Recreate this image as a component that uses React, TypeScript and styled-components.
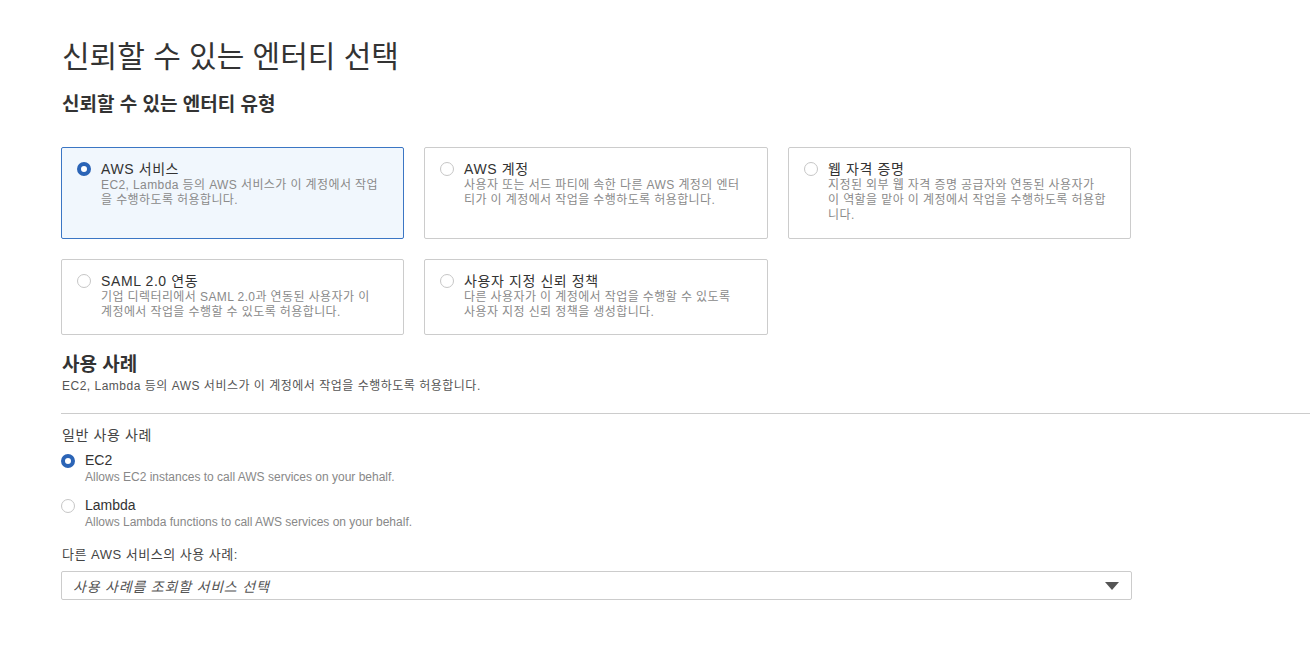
import React, { useState } from 'react';
import styled, { createGlobalStyle } from 'styled-components';

const GlobalStyle = createGlobalStyle`
  html, body {
    margin: 0;
    padding: 0;
    background: #fff;
  }
  body {
    font-family: 'Liberation Sans', Arial, 'Noto Sans CJK KR', sans-serif;
    color: #333;
  }
  * { box-sizing: border-box; }
`;

const Page = styled.div`
  padding: 38px 0 40px 61px;
  width: 1310px;
`;

const Title = styled.h1`
  margin: 0 0 0 1px;
  font-size: 30px;
  font-weight: 400;
  line-height: 38px;
  color: #333;
`;

const SectionTitle = styled.h2<{ $top?: number }>`
  margin: ${({ $top }) => $top ?? 0}px 0 0 1px;
  font-size: 19px;
  font-weight: 700;
  line-height: 24px;
  color: #333;
`;

const TypeGrid = styled.div`
  margin-top: 30px;
  display: grid;
  grid-template-columns: 343px 344px 343px;
  column-gap: 20px;
  row-gap: 20px;
  width: 1070px;
`;

const Card = styled.div<{ $selected?: boolean; $tall?: boolean }>`
  height: ${({ $tall }) => ($tall ? '92px' : '76px')};
  border: 1px solid ${({ $selected }) => ($selected ? '#3b76c4' : '#ccc')};
  border-radius: 2px;
  background: ${({ $selected }) => ($selected ? '#f1f7fd' : '#fff')};
  padding: 12px 14px 0 15px;
  display: flex;
  gap: 10px;
  cursor: pointer;
`;

const Radio = styled.span<{ $checked?: boolean }>`
  flex-shrink: 0;
  width: 14px;
  height: 14px;
  margin-top: 2px;
  border-radius: 50%;
  border: ${({ $checked }) => ($checked ? '4px solid #2b64b6' : '1px solid #c6c6c6')};
  background: #fff;
`;

const CardBody = styled.div`
  display: flex;
  flex-direction: column;
  min-width: 0;
  white-space: nowrap;
`;

const CardTitle = styled.div`
  font-size: 14px;
  line-height: 18px;
  letter-spacing: 0.6px;
  color: #333;
`;

const CardDesc = styled.div`
  font-size: 12px;
  line-height: 15px;
  letter-spacing: 0.4px;
  color: #8a8a8a;
`;

const UseCaseHeader = styled.div`
  margin-top: 18px;
  padding-bottom: 19px;
  border-bottom: 1px solid #ccc;
`;

const UseCaseDesc = styled.div`
  margin-top: 1px;
  margin-left: 1px;
  font-size: 12px;
  line-height: 16px;
  letter-spacing: 0.5px;
  color: #555;
`;

const GroupLabel = styled.div`
  margin-top: 12px;
  margin-left: 1px;
  font-size: 14px;
  line-height: 18px;
  letter-spacing: 0.6px;
  color: #444;
`;

const OptionList = styled.div`
  margin-top: 8px;
  display: flex;
  flex-direction: column;
  gap: 12px;
`;

const Option = styled.label`
  display: flex;
  gap: 10px;
  cursor: pointer;
`;

const OptionTitle = styled.div`
  font-size: 14px;
  line-height: 16px;
  color: #333;
`;

const OptionDesc = styled.div`
  margin-top: 2px;
  font-size: 12px;
  line-height: 15px;
  color: #888;
`;

const OtherLabel = styled.div`
  margin-top: 16px;
  margin-left: 1px;
  font-size: 13px;
  line-height: 18px;
  letter-spacing: 0.5px;
  color: #444;
`;

const Select = styled.div`
  margin-top: 7px;
  width: 1071px;
  height: 29px;
  border: 1px solid #ccc;
  border-radius: 2px;
  display: flex;
  align-items: center;
  justify-content: space-between;
  padding: 0 12px 0 11px;
`;

const Placeholder = styled.span`
  font-size: 14px;
  font-style: italic;
  letter-spacing: 0.8px;
  color: #555;
`;

const Caret = styled.svg`
  width: 14px;
  height: 8px;
`;

const types = [
  {
    title: 'AWS 서비스',
    desc: ['EC2, Lambda 등의 AWS 서비스가 이 계정에서 작업', '을 수행하도록 허용합니다.'],
  },
  {
    title: 'AWS 계정',
    desc: ['사용자 또는 서드 파티에 속한 다른 AWS 계정의 엔터', '티가 이 계정에서 작업을 수행하도록 허용합니다.'],
  },
  {
    title: '웹 자격 증명',
    desc: [
      '지정된 외부 웹 자격 증명 공급자와 연동된 사용자가',
      '이 역할을 맡아 이 계정에서 작업을 수행하도록 허용합',
      '니다.',
    ],
  },
  {
    title: 'SAML 2.0 연동',
    desc: ['기업 디렉터리에서 SAML 2.0과 연동된 사용자가 이', '계정에서 작업을 수행할 수 있도록 허용합니다.'],
  },
  {
    title: '사용자 지정 신뢰 정책',
    desc: ['다른 사용자가 이 계정에서 작업을 수행할 수 있도록', '사용자 지정 신뢰 정책을 생성합니다.'],
  },
];

const useCases = [
  { title: 'EC2', desc: 'Allows EC2 instances to call AWS services on your behalf.' },
  { title: 'Lambda', desc: 'Allows Lambda functions to call AWS services on your behalf.' },
];

export default function App() {
  const [type, setType] = useState(0);
  const [useCase, setUseCase] = useState(0);

  return (
    <Page>
      <GlobalStyle />
      <Title>신뢰할 수 있는 엔터티 선택</Title>
      <SectionTitle $top={17}>신뢰할 수 있는 엔터티 유형</SectionTitle>

      <TypeGrid>
        {types.map((t, i) => (
          <Card key={t.title} $selected={type === i} $tall={i < 3} onClick={() => setType(i)}>
            <Radio $checked={type === i} />
            <CardBody>
              <CardTitle>{t.title}</CardTitle>
              {t.desc.map((line) => (
                <CardDesc key={line}>{line}</CardDesc>
              ))}
            </CardBody>
          </Card>
        ))}
      </TypeGrid>

      <UseCaseHeader>
        <SectionTitle>사용 사례</SectionTitle>
        <UseCaseDesc>EC2, Lambda 등의 AWS 서비스가 이 계정에서 작업을 수행하도록 허용합니다.</UseCaseDesc>
      </UseCaseHeader>

      <GroupLabel>일반 사용 사례</GroupLabel>
      <OptionList>
        {useCases.map((u, i) => (
          <Option key={u.title} onClick={() => setUseCase(i)}>
            <Radio $checked={useCase === i} />
            <div>
              <OptionTitle>{u.title}</OptionTitle>
              <OptionDesc>{u.desc}</OptionDesc>
            </div>
          </Option>
        ))}
      </OptionList>

      <OtherLabel>다른 AWS 서비스의 사용 사례:</OtherLabel>
      <Select>
        <Placeholder>사용 사례를 조회할 서비스 선택</Placeholder>
        <Caret viewBox="0 0 14 8">
          <path d="M0 0 H14 L7 8 Z" fill="#555" />
        </Caret>
      </Select>
    </Page>
  );
}
